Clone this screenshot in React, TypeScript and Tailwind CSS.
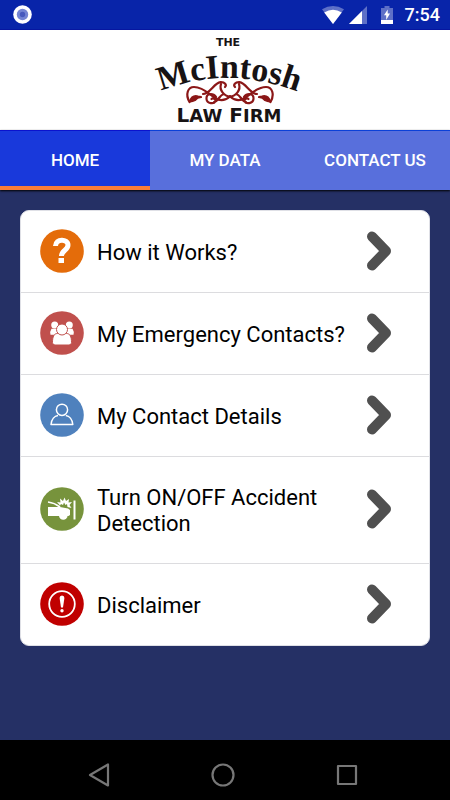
import React, { ReactNode } from "react";

function ScrollHalf() {
  return (
    <>
      <path d="M35.500 72C31 64 34 57 40 57C49 57 55 64 61 68C67 72 72 70 76 66.500" />
      <path d="M36 71.500Q38 65 44 66.500L47 67Q43 67.500 41 70Q38.500 71 36 71.500Z" fill="#8b1717" />
      <path d="M49 64C56 64 60 53 66.500 52.200C71 52 73 55 71 57" />
      <path d="M67 54C65 60 70 66 76 66.500M62 67C59 63 52 63 52.500 69C53 74 60 74 61.500 71.500C62 69 59 67.500 57.500 69M60 72C65 71 65 65 70 64" />
    </>
  );
}

function FirmLogo() {
  return (
    <svg viewBox="-5 0 160 100" className="h-[100px] w-[160px]" role="img" aria-label="The McIntosh Law Firm">
      <defs>
        <path id="arch" d="M7 61 Q 40 48 72 48 Q 112 48 154 66" />
      </defs>
      <g fill="#171314" fontWeight="700">
        <text x="74" y="16" textAnchor="middle" fontFamily="'DejaVu Sans', sans-serif" fontSize="11">
          THE
        </text>
        <text fontFamily="'Liberation Serif', serif" fontSize="34">
          <textPath href="#arch">McIntosh</textPath>
        </text>
        <text x="75" y="92" textAnchor="middle" fontFamily="'DejaVu Sans', sans-serif" fontSize="20">
          L<tspan fontSize="18">AW</tspan> F<tspan fontSize="18">IRM</tspan>
        </text>
      </g>
      <g fill="none" stroke="#8b1717" strokeWidth="2.2" strokeLinecap="round" strokeLinejoin="round">
        <ScrollHalf />
        <g transform="matrix(-1 0 0 1 152 0)">
          <ScrollHalf />
        </g>
      </g>
    </svg>
  );
}

function StatusBar() {
  return (
    <div className="flex h-[30px] items-center border-b border-[#0616a0] bg-[#0824a9] pr-[10px] pl-[13px] text-white">
      <svg viewBox="0 0 19 19" className="size-[19px]" aria-hidden="true">
        <circle cx="9.5" cy="9.5" r="9.3" fill="#fff" />
        <circle cx="9.5" cy="9.5" r="5.7" fill="#7384d3" />
        <circle cx="9.5" cy="9.5" r="2.7" fill="#4659bd" />
      </svg>
      <div className="ml-auto flex items-center">
        <svg viewBox="0 0 22 18" className="mr-[5px] h-[18px] w-[22px]" aria-hidden="true">
          <path d="M0 3.3 Q11-3.3 22 3.3 L11 18Z" fill="#fff" opacity=".35" />
          <path d="M2.2 6.5 Q11 1.2 19.8 6.5 L11 18Z" fill="#fff" />
        </svg>
        <svg viewBox="0 0 18 18" className="mr-[14px] size-[18px]" aria-hidden="true">
          <path d="M0 18 L18 0 V18Z" fill="#fff" opacity=".35" />
          <path d="M0 18 L13 5 V18Z" fill="#fff" />
        </svg>
        <svg viewBox="0 0 12 18" className="mr-[12px] h-[18px] w-[12px]" aria-hidden="true">
          <path d="M0 2h3.5V0h5v2H12v12H0Z" fill="#fff" opacity=".35" />
          <path d="M0 14h12v4H0Z M6.7 3.5v4H9L5.2 14v-4.8H3Z" fill="#fff" />
        </svg>
        <span className="text-[18px] leading-[20px] font-medium">7:54</span>
      </div>
    </div>
  );
}

const tabs = ["HOME", "MY DATA", "CONTACT US"];

function Tabs() {
  return (
    <nav className="grid h-[60px] grid-cols-3 shadow-[0_1px_2px_#000]">
      {tabs.map((tab, i) => (
        <button
          key={tab}
          type="button"
          aria-current={i === 0 ? "page" : undefined}
          className={
            i === 0
              ? "border-t border-b-4 border-t-[#0a12ce] border-b-[#fb7d38] bg-[#1939db] pt-[3px] text-[17px] leading-[20px] font-medium text-white"
              : "border-t border-b-4 border-t-[#0b40d8] border-b-[#586fdc] bg-[#586fdc] pt-[3px] text-[17px] leading-[20px] font-medium text-white"
          }
        >
          {tab}
        </button>
      ))}
    </nav>
  );
}

function Badge({ fill, children }: { fill: string; children: ReactNode }) {
  return (
    <svg viewBox="0 0 44 44" className="size-[44px] shrink-0" aria-hidden="true">
      <circle cx="22" cy="22" r="21.8" fill={fill} />
      {children}
    </svg>
  );
}

const rows = [
  {
    label: "How it Works?",
    icon: (
      <Badge fill="#e46c0a">
        <path d="M15.500 17C15.500 9.500 28 9.500 28 16C28 21.500 21.500 21 21.500 27" fill="none" stroke="#fff" strokeWidth="5" />
        <path d="M18.5 29h5.5v5h-5.5z" fill="#fff" />
      </Badge>
    ),
  },
  {
    label: "My Emergency Contacts?",
    icon: (
      <Badge fill="#c0504d">
        <g fill="#fff">
          <circle cx="14.7" cy="14" r="3.5" />
          <circle cx="29.3" cy="14" r="3.5" />
          <path d="M11.500 17.700h7l-1 6H10.500q-1-3 1-6ZM32.500 17.700h-7l1 6h7q1-3-1-6Z" />
        </g>
        <g fill="#fff" stroke="#c0504d">
          <path d="M12.5 31.5c0-6 1.5-9 5-9h9c3.5 0 5 3 5 9q0 2.5-2.5 2.5h-14q-2.5 0-2.5-2.5Z" />
          <circle cx="22" cy="18.500" r="5.5" />
        </g>
      </Badge>
    ),
  },
  {
    label: "My Contact Details",
    icon: (
      <Badge fill="#4f81bd">
        <g fill="none" stroke="#fff" strokeWidth="1.5" strokeLinejoin="round">
          <circle cx="22" cy="16.8" r="5.6" />
          <path d="M18 22.5c-3.500 .5-6.500 4-7 9h21.800c-.5-5-3.500-8.500-7-9" />
        </g>
      </Badge>
    ),
  },
  {
    label: "Turn ON/OFF Accident Detection",
    icon: (
      <Badge fill="#77933c">
        <g fill="#fff">
          <path d="M8 20h12l8 1.500 2 1.500v5l-1.500 1H8Z" />
          <circle cx="23.300" cy="28.500" r="4.300" />
          <path d="M20 18.500l-3-3.500 3.500 .5-.5-4 3 2.500 1.500-3.500 1.500 3.500 3-2-.5 3.500 3.500-.5-2.500 3 2 3-4-1-.5-3-1.500 1-1.500-2.500-1 2.500-2-1Z" />
          <path d="M33.500 13.500h2v19h-2Z" />
        </g>
        <path d="M8 15c4 .5 8 2 12 5" fill="none" stroke="#fff" strokeWidth="1.6" />
      </Badge>
    ),
  },
  {
    label: "Disclaimer",
    icon: (
      <Badge fill="#c00000">
        <circle cx="22" cy="22" r="12.8" fill="none" stroke="#fff" strokeWidth="1.8" />
        <path d="M19.6 16q0-2.500 2.400-2.500t2.400 2.500L23 25.5h-2Z" fill="#fff" />
        <circle cx="22" cy="28.8" r="1.7" fill="#fff" />
      </Badge>
    ),
  },
];

function Menu() {
  return (
    <ul className="divide-y divide-[#dcdcdf] overflow-hidden rounded-[9px] border border-[#dfe0e6] bg-white">
      {rows.map((row) => (
        <li key={row.label}>
          <button type="button" className="flex min-h-[81px] w-full items-center pt-[28px] pr-[37px] pb-[26px] pl-[19px] text-left">
            <span className="-mt-[12px] -mb-[8px] shrink-0">{row.icon}</span>
            <span className="ml-[13px] flex-1 text-[22px] leading-[26px] text-black">{row.label}</span>
            <svg viewBox="0 0 26 40" className="-mt-[12px] -mb-[8px] h-[40px] w-[26px] shrink-0" aria-hidden="true">
              <path d="M6 5.500 20 20 6 34.500" fill="none" stroke="#505050" strokeWidth="10" strokeLinecap="round" strokeLinejoin="round" />
            </svg>
          </button>
        </li>
      ))}
    </ul>
  );
}

function SystemNav() {
  return (
    <div className="grid h-[60px] grid-cols-3 place-items-center bg-black pt-[10px] pr-[41px] pl-[37px]">
      <button type="button" aria-label="Back">
        <svg viewBox="0 0 24 24" className="size-[24px]" fill="none" stroke="#777" strokeWidth="2.2" strokeLinejoin="round">
          <path d="M21 1.5v21L3 12Z" />
        </svg>
      </button>
      <button type="button" aria-label="Home">
        <svg viewBox="0 0 24 24" className="size-[24px]" fill="none" stroke="#777" strokeWidth="2.2">
          <circle cx="12" cy="12" r="10.5" />
        </svg>
      </button>
      <button type="button" aria-label="Recent apps">
        <svg viewBox="0 0 24 24" className="size-[24px]" fill="none" stroke="#777" strokeWidth="2.2" strokeLinejoin="round">
          <path d="M3 3h18v18H3Z" />
        </svg>
      </button>
    </div>
  );
}

export default function App() {
  return (
    <div className="flex min-h-screen flex-col bg-[#253065] font-[Roboto,sans-serif]">
      <StatusBar />
      <header className="flex h-[100px] justify-center bg-white pl-[8px]">
        <FirmLogo />
      </header>
      <Tabs />
      <main className="flex-1 p-[20px]">
        <Menu />
      </main>
      <SystemNav />
    </div>
  );
}
